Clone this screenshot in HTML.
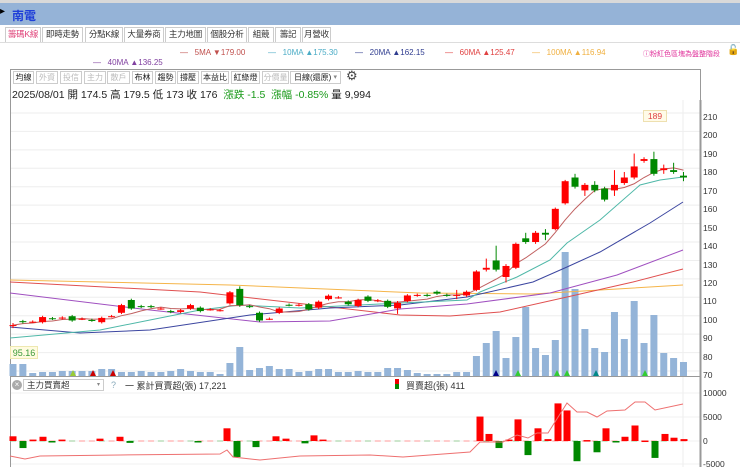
<!DOCTYPE html>
<html><head><meta charset="utf-8"><style>
*{margin:0;padding:0;box-sizing:border-box}
body{width:740px;height:467px;overflow:hidden;background:#fff;font-family:"Liberation Sans","Noto Sans CJK TC",sans-serif;position:relative}
.a{position:absolute;white-space:nowrap}
.tab{position:absolute;top:27px;height:15px;border:1px solid #ccc;border-bottom:none;font-size:8.5px;line-height:13px;text-align:center;color:#333;background:#fff;white-space:nowrap;overflow:hidden;letter-spacing:-0.2px}
.ma{position:absolute;font-size:8px;top:48px;white-space:nowrap}
.btn{position:absolute;top:71px;height:13px;border:1px solid #ccc;font-size:8px;line-height:11px;text-align:center;color:#222;background:#fff;white-space:nowrap;overflow:hidden}
.dis{color:#bbb}
</style></head><body>
<div class="a" style="left:0;top:0;width:740px;height:3px;background:#d9d9d9"></div>
<div class="a" style="left:0;top:3px;width:740px;height:22px;background:#95b3d7"></div>
<div class="a" style="left:0;top:6px;font-size:10px;color:#000">▸</div>
<div class="a" style="left:12px;top:7px;font-size:12px;font-weight:bold;color:#1f3fd8">南電</div>
<div class="a" style="left:0;top:42px;width:740px;height:1px;background:#ddd"></div>
<div class="tab" style="left:5px;width:36px;color:#e0457b">籌碼K線</div>
<div class="tab" style="left:42px;width:41px">即時走勢</div>
<div class="tab" style="left:85px;width:38px">分點K線</div>
<div class="tab" style="left:124px;width:40px">大量券商</div>
<div class="tab" style="left:165px;width:41px">主力地圖</div>
<div class="tab" style="left:207px;width:40px">個股分析</div>
<div class="tab" style="left:248px;width:26px">組競</div>
<div class="tab" style="left:275px;width:26px">籌記</div>
<div class="tab" style="left:302px;width:29px">月營收</div>

<div class="ma" style="left:180px;color:#c0504d">—&nbsp;&nbsp;&nbsp;5MA ▼179.00</div>
<div class="ma" style="left:268px;color:#4bacc6">—&nbsp;&nbsp;&nbsp;10MA ▲175.30</div>
<div class="ma" style="left:355px;color:#2f3c8f">—&nbsp;&nbsp;&nbsp;20MA ▲162.15</div>
<div class="ma" style="left:445px;color:#e04040">—&nbsp;&nbsp;&nbsp;60MA ▲125.47</div>
<div class="ma" style="left:532px;color:#f0b040">—&nbsp;&nbsp;&nbsp;100MA ▲116.94</div>
<div class="ma" style="left:643px;color:#e0309a;font-size:7px;top:49px">ⓘ粉紅色區塊為盤整階段</div>
<div class="a" style="left:727px;top:45px;font-size:10px">🔓</div>
<div class="ma" style="left:93px;top:58px;color:#8040a0">—&nbsp;&nbsp;&nbsp;40MA ▲136.25</div>

<div class="btn" style="left:13px;width:21px">均線</div>
<div class="btn dis" style="left:36px;width:22px">外資</div>
<div class="btn dis" style="left:60px;width:22px">投信</div>
<div class="btn dis" style="left:84px;width:22px">主力</div>
<div class="btn dis" style="left:107px;width:23px">散戶</div>
<div class="btn" style="left:132px;width:21px">布林</div>
<div class="btn" style="left:155px;width:21px">趨勢</div>
<div class="btn" style="left:177px;width:22px">撐壓</div>
<div class="btn" style="left:201px;width:28px">本益比</div>
<div class="btn" style="left:231px;width:29px">紅綠燈</div>
<div class="btn dis" style="left:262px;width:27px">分價量</div>
<div class="btn" style="left:290px;width:51px;text-align:left;padding-left:3px">日線(還原)<span style="position:absolute;right:3px;color:#888;font-size:7px">▾</span></div>
<div class="a" style="left:346px;top:68px;font-size:13px;color:#444">⚙</div>
<div class="a" style="left:12px;top:87px;font-size:10.5px;color:#222">2025/08/01 開 174.5 高 179.5 低 173 收 176 <span style="color:#1a9a1a">&nbsp;漲跌 -1.5 &nbsp;漲幅 -0.85%</span> 量 9,994</div>

<svg class="a" style="left:0;top:0" width="740" height="467" id="s"></svg>

<div class="a" style="left:10px;top:346px;width:28px;height:13px;background:#fffbe0;border:1px solid #eee8b0;font-size:9px;color:#3a9a3a;text-align:center;line-height:12px">95.16</div>
<div class="a" style="left:643px;top:110px;width:24px;height:12px;background:#fffbe8;border:1px solid #eee0b0;font-size:8.5px;color:#e04040;text-align:center;line-height:11px">189</div>

<div class="a" style="left:703px;top:108px;font-size:8.5px;color:#333;line-height:18.43px">210<br>200<br>190<br>180<br>170<br>160<br>150<br>140<br>130<br>120<br>110<br>100<br>90<br>80<br>70</div>
<div class="a" style="left:703px;top:388px;font-size:8.5px;color:#333">10000</div>
<div class="a" style="left:703px;top:412px;font-size:8.5px;color:#333">5000</div>
<div class="a" style="left:703px;top:436px;font-size:8.5px;color:#333">0</div>
<div class="a" style="left:703px;top:459px;font-size:8.5px;color:#333">-5000</div>

<div class="a" style="left:12px;top:380px;width:10px;height:10px;border-radius:50%;background:#aaa;color:#fff;font-size:8px;line-height:10px;text-align:center">×</div>
<div class="a" style="left:23px;top:379px;width:81px;height:12px;border:1px solid #ccc;font-size:8.5px;line-height:10px;padding-left:3px;color:#333">主力買賣超<span style="position:absolute;right:3px;color:#888;font-size:6px">▾</span></div>
<div class="a" style="left:111px;top:380px;font-size:9px;color:#8ab">?</div>
<div class="a" style="left:125px;top:379px;font-size:9px;color:#333">一 累計買賣超(張) 17,221</div>
<div class="a" style="left:395px;top:379px;width:4px;height:10px;background:linear-gradient(#e00 50%,#080 50%)"></div>
<div class="a" style="left:406px;top:379px;font-size:9px;color:#333">買賣超(張) 411</div>

<script>
var s=document.getElementById('s'),h='';
function Y(p){return 113+(210-p)*1.843}
function cv(p){return 210-((210-p)*1.707+18)/1.843}
var L=[[96.3,96.3,97.5,94.5],[98.6,98],[98.3,98.3],[98,101],[100.3,100],[100.3,100.7],[101.5,99],[100,100],[99.3,99],[98,100.5],[101.5,101.5],[103.5,108],[111,106],[107.4,107],[107.4,107],[106,106],[104.5,104],[104,105],[106,108],[106.5,104.5],[105.5,105.5],[105,105],[109,115.5],[117.5,108,119,107],[107.4,107],[103.5,99],[100,100],[103.5,106],[108.2,108],[108,108.2],[108.5,105.5],[106.5,110],[111.5,113.5],[112.5,112.5],[110,108.5],[107.5,111],[113,110.5],[110.5,110.8],[110.5,107]];
var D=[];L.forEach(function(a){var o=cv(a[0]),c=cv(a[1]);var hi=a[2]?cv(a[2]):Math.max(o,c)+0.7,lo=a[3]?cv(a[3]):Math.min(o,c)-0.7;D.push([o,c,hi,lo])});
var R=[[104,107,108,101],[108,111],[111,111.3],[111.3,111],[113,112],[111.3,111],[111,111.3,114,109],[111,113],[114,124],[125,126,131,124],[130,125,138,124],[121,127,128,118],[126,139],[142,140,145,139],[140,145,146,139],[145,144,147,141],[147,158],[161,173],[175,170,177,169],[168,171,172,165],[171,168,173,167],[169,163,170,162],[168,171,179,165],[172,175,178,171],[175,181,188,174],[184,185,186,183],[185,177,189,176],[179,180,182,177],[179,178,183,177],[176,175,178,173]];
R.forEach(function(a){D.push([a[0],a[1],a[2]||Math.max(a[0],a[1])+0.7,a[3]||Math.min(a[0],a[1])-0.7])});
function X(i){return 13+i*9.86}
for(var p=210;p>=70;p-=10)h+='<line x1="10" x2="700" y1="'+Y(p)+'" y2="'+Y(p)+'" stroke="#eee"/>';
h+='<line x1="683" x2="683" y1="100" y2="467" stroke="#eee"/>';
[393,417,441,464].forEach(function(y){h+='<line x1="10" x2="700" y1="'+y+'" y2="'+y+'" stroke="#f0f0f0"/>'});
h+='<rect x="10.5" y="69.5" width="690" height="400" fill="none" stroke="#999"/>';
h+='<line x1="700.5" x2="700.5" y1="100" y2="467" stroke="#999" stroke-width="2"/>';
h+='<line x1="10" x2="700" y1="376.5" y2="376.5" stroke="#999"/>';
var V=[364,364,373,372,372,371,371,371,371,369,369,372,372,371,372,372,371,369,371,372,372,374,363,347,370,368,366,369,369,372,371,369,369,372,372,371,372,372,368,368,370,373,374,374,374,372,372,356,343,331,358,337,307,348,355,340,252,289,329,348,352,312,339,301,343,315,353,358,362];
V.forEach(function(t,i){h+='<rect x="'+(X(i)-3.5)+'" y="'+t+'" width="7" height="'+(376-t)+'" fill="#94b4d8"/>'});
[[73,'#9c3'],[93,'#c00'],[113,'#c00'],[496,'#008'],[518,'#3c3'],[557,'#3c3'],[567,'#3c3'],[596,'#088'],[645,'#3c3']].forEach(function(m){h+='<polygon points="'+(m[0]-3)+',376 '+(m[0]+3)+',376 '+m[0]+',370" fill="'+m[1]+'"/>'});
function pl(pts,c){h+='<polyline fill="none" stroke="'+c+'" stroke-width="1" points="'+pts.map(function(q){return q.join(',')}).join(' ')+'"/>'}
pl([[10,280],[230,285],[420,293],[533,294],[600,290],[683,285]],'#f5b54a');
pl([[10,282],[200,292],[400,315],[450,316],[500,312],[567,297],[633,282],[683,269]],'#e05050');
pl([[10,293],[150,310],[260,322],[330,321],[400,309],[467,304],[550,293],[617,275],[683,250]],'#a050c0');
pl([[10,327],[80,333],[150,330],[250,315],[330,308],[400,305],[467,297],[533,282],[567,267],[600,252],[650,223],[683,202]],'#3c46a0');
pl([[10,338],[100,330],[150,320],[200,310],[240,305],[300,308],[400,303],[467,300],[480,292],[517,277],[550,260],[567,243],[600,220],[640,185],[660,180],[683,177]],'#4fb8a8');
var m5=[];for(var i=0;i<D.length;i++){var a=0,n=0;for(var j=Math.max(0,i-4);j<=i;j++){a+=D[j][1];n++}m5.push([X(i),Y(a/n)])}
pl(m5,'#c06060');
D.forEach(function(d,i){var x=X(i),up=d[1]>=d[0],c=up?'#f00':'#080';var t=Y(Math.max(d[0],d[1])),b=Y(Math.min(d[0],d[1]));var hh=Math.max(b-t,1);
h+='<line x1="'+x+'" x2="'+x+'" y1="'+Y(d[2])+'" y2="'+Y(d[3])+'" stroke="'+c+'"/>';
h+='<rect x="'+(x-3.5)+'" y="'+t+'" width="7" height="'+hh+'" fill="'+c+'"/>'});
var B=[[13,1000],[23,-1500],[33,300],[43,900],[52,-200],[62,300],[100,500],[120,900],[130,-400],[198,-200],[227,2700],[237,-3400],[256,-1300],[276,1000],[286,500],[305,-500],[314,1200],[323,300],[480,5200],[489,1500],[499,-1500],[509,300],[518,4600],[528,-3000],[538,2700],[548,400],[558,8000],[567,6500],[577,-4300],[587,200],[597,-2400],[606,2700],[616,-100],[625,900],[635,3300],[645,100],[655,-3600],[665,1500],[674,700],[684,400]];
for(var i=0;i<69;i++){var x=X(i);h+='<line x1="'+(x-3)+'" x2="'+(x+3)+'" y1="441" y2="441" stroke="'+(i%3?'#f99':'#9c9')+'"/>'}
B.forEach(function(b){var hh=Math.abs(b[1])*0.0047;h+='<rect x="'+(b[0]-3.5)+'" y="'+(b[1]>0?441-hh:441)+'" width="7" height="'+Math.max(hh,1.5)+'" fill="'+(b[1]>0?'#f00':'#080')+'"/>'});
pl([[10,456],[25,459],[40,456],[120,455],[220,454],[227,450],[233,457],[260,460],[300,456],[370,455],[403,457],[470,452],[480,442],[503,442],[517,435],[528,438],[537,433],[548,433],[567,403],[577,412],[587,412],[597,417],[607,411],[625,410],[635,402],[645,402],[655,410],[683,404]],'#ee7070');
s.innerHTML=h;
</script>
</body></html>
